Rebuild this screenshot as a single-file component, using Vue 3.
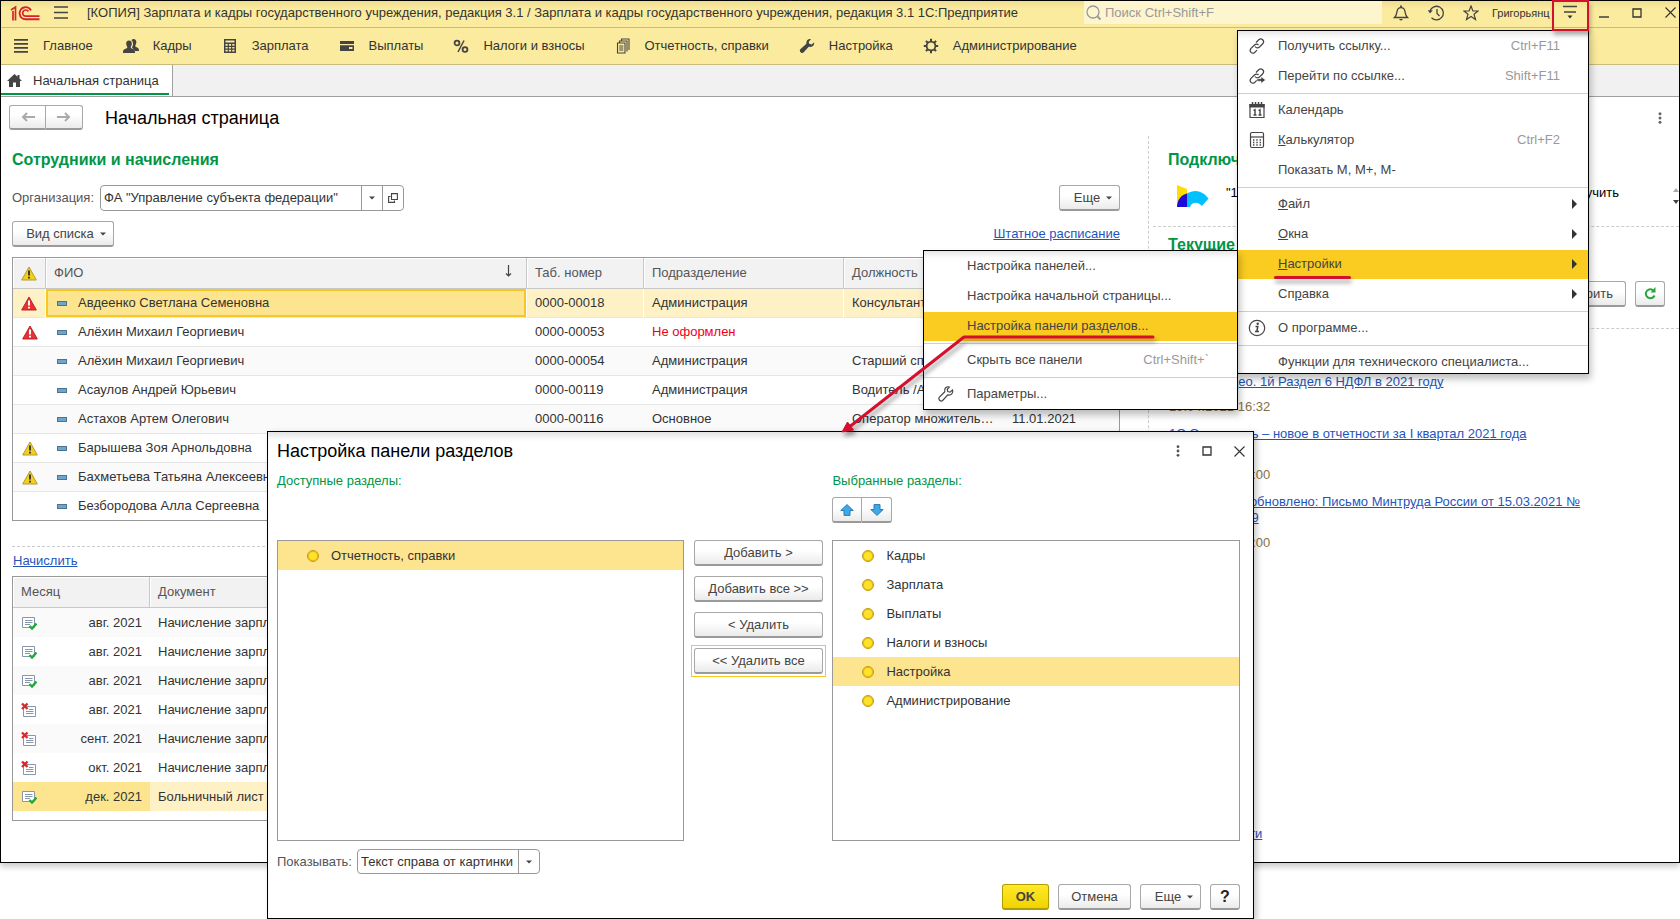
<script setup>
import { ref } from 'vue'

const sections = [
  { icon: 'list', label: 'Главное' },
  { icon: 'people', label: 'Кадры' },
  { icon: 'calc', label: 'Зарплата' },
  { icon: 'card', label: 'Выплаты' },
  { icon: 'percent', label: 'Налоги и взносы' },
  { icon: 'docs', label: 'Отчетность, справки' },
  { icon: 'wrench', label: 'Настройка' },
  { icon: 'gear', label: 'Администрирование' }
]

const employees = [
  { mark: 'error', name: 'Авдеенко Светлана Семеновна', num: '0000-00018', dept: 'Администрация', post: 'Консультант', date: '' },
  { mark: 'error', name: 'Алёхин Михаил Георгиевич', num: '0000-00053', dept: 'Не оформлен', post: '', date: '', off: true },
  { mark: '', name: 'Алёхин Михаил Георгиевич', num: '0000-00054', dept: 'Администрация', post: 'Старший специалист', date: '' },
  { mark: '', name: 'Асаулов Андрей Юрьевич', num: '0000-00119', dept: 'Администрация', post: 'Водитель /АХО/', date: '' },
  { mark: '', name: 'Астахов Артем Олегович', num: '0000-00116', dept: 'Основное', post: 'Оператор множительной техники', date: '11.01.2021' },
  { mark: 'warn', name: 'Барышева Зоя Арнольдовна', num: '', dept: '', post: '', date: '' },
  { mark: 'warn', name: 'Бахметьева Татьяна Алексеевна', num: '', dept: '', post: '', date: '' },
  { mark: '', name: 'Безбородова Алла Сергеевна', num: '', dept: '', post: '', date: '' }
]

const accruals = [
  { ok: true, month: 'авг. 2021', doc: 'Начисление зарплаты' },
  { ok: true, month: 'авг. 2021', doc: 'Начисление зарплаты' },
  { ok: true, month: 'авг. 2021', doc: 'Начисление зарплаты' },
  { ok: false, month: 'авг. 2021', doc: 'Начисление зарплаты' },
  { ok: false, month: 'сент. 2021', doc: 'Начисление зарплаты' },
  { ok: false, month: 'окт. 2021', doc: 'Начисление зарплаты' },
  { ok: true, month: 'дек. 2021', doc: 'Больничный лист' }
]

const mainMenu = [
  [
    { icon: 'link', pre: 'Получить ссылку...', key: 'Ctrl+F11' },
    { icon: 'golink', pre: 'Перейти по ссылке...', key: 'Shift+F11' }
  ],
  [
    { icon: 'calendar', pre: 'Кален', hot: 'д', post: 'арь' },
    { icon: 'calculator', hot: 'К', post: 'алькулятор', key: 'Ctrl+F2' },
    { pre: 'Показать М, М+, М-' }
  ],
  [
    { hot: 'Ф', post: 'айл', sub: true },
    { hot: 'О', post: 'кна', sub: true },
    { hot: 'Н', post: 'астройки', sub: true, active: true },
    { pre: 'Сп', hot: 'р', post: 'авка', sub: true }
  ],
  [{ icon: 'info', pre: 'О программе...' }],
  [{ pre: 'Функции для технического специалиста...' }]
]

const subMenu = [
  [
    { pre: 'Настройка панелей...' },
    { pre: 'Настройка начальной страницы...' },
    { pre: 'Настройка панели разделов...', active: true }
  ],
  [{ pre: 'Скрыть все панели', key: 'Ctrl+Shift+`' }],
  [{ icon: 'spanner', pre: 'Параметры...' }]
]

const available = ['Отчетность, справки']
const chosen = ['Кадры', 'Зарплата', 'Выплаты', 'Налоги и взносы', 'Настройка', 'Администрирование']
const activeChosen = ref('Настройка')
const organization = ref('ФА "Управление субъекта федерации"')
const search = ref('')
</script>

<template>
  <div class="screen">
    <div class="window">
      <header class="titlebar">
        <svg class="logo" width="30" height="16" viewBox="0 0 30 16" fill="none" stroke="#d8232a">
          <path d="M1 5L5.500 2V15.500M3 6V15.500" stroke-width="1.700" />
          <path d="M21 5.500A6 6 0 1 0 15.500 14.200H29.500" stroke-width="1.900" />
          <path d="M18.400 6.500A3.100 3.100 0 1 0 15.500 11.200H29.500" stroke-width="1.700" />
        </svg>
        <button class="bare burger" aria-label="Меню">
          <svg width="16" height="13" viewBox="0 0 16 13" stroke="#444" stroke-width="1.300"><path d="M1 1H15M1 6.500H15M1 12H15" /></svg>
        </button>
        <div class="apptitle">[КОПИЯ] Зарплата и кадры государственного учреждения, редакция 3.1 / Зарплата и кадры государственного учреждения, редакция 3.1 1С:Предприятие</div>
        <label class="search">
          <svg width="16" height="16" viewBox="0 0 16 16" fill="none" stroke="#999" stroke-width="1.300"><circle cx="7" cy="7" r="6" /><path d="M11.500 11.500L14.500 14.500" stroke-width="2" /></svg>
          <input v-model="search" type="text" placeholder="Поиск Ctrl+Shift+F" aria-label="Поиск" />
        </label>
        <div class="tools">
          <button class="bare" aria-label="Уведомления">
            <svg width="16" height="16" viewBox="0 0 16 16" fill="none" stroke="#444" stroke-width="1.300"><path d="M1.500 12.500H14.500C12.500 10.500 12.500 9 12 6.500C11.500 4 10 2.700 8 2.700S4.500 4 4 6.500C3.500 9 3.500 10.500 1.500 12.500Z" /><path d="M8 .5V2.500" stroke-width="1.800" /><path d="M5.800 14H10.200L8 15.800Z" fill="#444" stroke="none" /></svg>
          </button>
          <button class="bare" aria-label="История">
            <svg width="18" height="16" viewBox="0 0 18 16" fill="none" stroke="#444" stroke-width="1.300"><path d="M3 6A6.800 6.800 0 1 1 4.500 12.700" /><path d="M10 4V8.500L12.500 11" /><path d="M.8 5.200H5.800L3 8.500Z" fill="#444" stroke="none" /></svg>
          </button>
          <button class="bare" aria-label="Избранное">
            <svg width="16" height="16" viewBox="0 0 16 16" fill="none" stroke="#444" stroke-width="1.200"><path d="M8 1L9.900 6H15L11 9.200L12.500 14.500L8 11.400L3.500 14.500L5 9.200L1 6H6.100Z" /></svg>
          </button>
        </div>
        <div class="user">Григорьянц</div>
        <button class="bare service" aria-label="Сервис и настройки">
          <svg width="16" height="15" viewBox="0 0 16 15" stroke="#444" stroke-width="1.400"><path d="M1 1.500H15M2 7H14" /><path d="M5.500 10.500H10.500L8 13.500Z" fill="#333" stroke="none" /></svg>
        </button>
        <div class="wincontrols">
          <button class="bare" aria-label="Свернуть"><svg width="10" height="12" viewBox="0 0 10 12" stroke="#333" stroke-width="1.400"><path d="M0 10H10" /></svg></button>
          <button class="bare" aria-label="Развернуть"><svg width="10" height="10" viewBox="0 0 10 10" fill="none" stroke="#333" stroke-width="1.300"><path d="M1 1H9V9H1Z" /></svg></button>
          <button class="bare" aria-label="Закрыть"><svg width="11" height="11" viewBox="0 0 11 11" stroke="#333" stroke-width="1.100"><path d="M.5 .5L10.500 10.500M10.500 .5L.5 10.500" /></svg></button>
        </div>
      </header>

      <nav class="sections">
        <a v-for="s in sections" :key="s.label" href="#" class="section">
          <svg width="16" height="16" viewBox="0 0 16 16" fill="#444">
            <path v-if="s.icon === 'list'" d="M1 1H15V2.700H1ZM1 5H15V6.700H1ZM1 9H15V10.700H1ZM1 13H15V14.700H1Z" />
            <g v-else-if="s.icon === 'people'">
              <path d="M10.500 1C12.500 1 13.500 2.500 13.300 4.500C13.200 6 12.600 6.800 12.300 7.500V8.500L15 10C15.700 10.500 16 11.300 16 13H12L9 9.500C10.500 7 10.500 4 8.500 2.200C9 1.400 9.600 1 10.500 1Z" />
              <path d="M6 2.500C8 2.500 9 4 8.800 6C8.700 7.500 8 8.200 7.800 8.800V10L11 11.600C11.700 12 12 13 12 15H0C0 13 .3 12 1 11.600L4.200 10V8.800C4 8.200 3.300 7.500 3.200 6C3 4 4 2.500 6 2.500Z" />
            </g>
            <path v-else-if="s.icon === 'calc'" fill-rule="evenodd" d="M2 1H14V15H2ZM3.500 2.500V4.500H12.500V2.500ZM3.500 6V7.700H5.700V6ZM6.900 6V7.700H9.100V6ZM10.300 6V7.700H12.500V6ZM3.500 8.900V10.600H5.700V8.900ZM6.900 8.900V10.600H9.100V8.900ZM10.300 8.900V10.600H12.500V8.900ZM3.500 11.800V13.500H5.700V11.800ZM6.900 11.800V13.500H9.100V11.800ZM10.300 11.800V13.500H12.500V11.800Z" />
            <path v-else-if="s.icon === 'card'" fill-rule="evenodd" d="M1 3H15V6H1ZM1 7.200H15V13H1ZM10 9V11H13.500V9Z" />
            <g v-else-if="s.icon === 'percent'" fill="none" stroke="#444" stroke-width="1.800"><circle cx="4" cy="5" r="2.400" /><circle cx="12" cy="11.500" r="2.400" /><path d="M11 2.500L5 14" stroke-width="1.500" /></g>
            <g v-else-if="s.icon === 'docs'" fill="none" stroke="#444" stroke-width="1.100"><path d="M2.500 5H10V15H2.500ZM4.500 5V3H12V13.500M6.500 3V1H14V12" /><path d="M4.200 8H8.300M4.200 10H8.300M4.200 12H8.300" /></g>
            <path v-else-if="s.icon === 'wrench'" d="M15 4.500L12.700 6.500L10.200 5.800L9.700 3.800L12 1.200C9.500 .4 6.800 2.500 7.400 5.800L1.300 11.200C-.3 12.900 2.500 16.300 4.500 14.600L9.800 8.800C13 9.500 15.800 7.500 15 4.500Z" />
            <g v-else fill="none" stroke="#444"><circle cx="8" cy="8" r="4.400" stroke-width="1.800" /><path d="M8 .8V3.500M8 12.500V15.200M.8 8H3.500M12.500 8H15.200M2.900 2.900L4.800 4.800M11.200 11.200L13.100 13.100M2.900 13.100L4.800 11.200M11.200 4.800L13.100 2.900" stroke-width="2" /></g>
          </svg>
          <span>{{ s.label }}</span>
        </a>
      </nav>

      <div class="tabs">
        <a href="#" class="tab">
          <svg width="15" height="13" viewBox="0 0 15 13" fill="#444"><path d="M7.500 0L10.500 2.700V1H12.500V4.500L15 7H13V13H9V8.500H6V13H2V7H0Z" /></svg>
          <span>Начальная страница</span>
        </a>
      </div>

      <div class="pagehead">
        <div class="pair nav">
          <button class="btn" aria-label="Назад"><svg width="14" height="10" viewBox="0 0 14 10" fill="none" stroke="#aaa" stroke-width="2"><path d="M14 5H2M6 1L2 5L6 9" /></svg></button>
          <button class="btn" aria-label="Вперед"><svg width="14" height="10" viewBox="0 0 14 10" fill="none" stroke="#aaa" stroke-width="2"><path d="M0 5H12M8 1L12 5L8 9" /></svg></button>
        </div>
        <h1>Начальная страница</h1>
        <button class="bare kebab" aria-label="Еще действия"><svg width="4" height="12" viewBox="0 0 4 12" fill="#666"><circle cx="2" cy="1.700" r="1.500" /><circle cx="2" cy="6" r="1.500" /><circle cx="2" cy="10.300" r="1.500" /></svg></button>
      </div>

      <div class="content">
        <main class="left">
          <h2>Сотрудники и начисления</h2>
          <div class="orgrow">
            <label for="org">Организация:</label>
            <div class="combo">
              <input id="org" v-model="organization" type="text" />
              <button aria-label="Выбрать из списка"><svg width="6" height="4" viewBox="0 0 6 4" fill="#444"><path d="M0 .5H6L3 3.500Z" /></svg></button>
              <button aria-label="Открыть"><svg width="10" height="10" viewBox="0 0 10 10" fill="none" stroke="#444" stroke-width="1.100"><path d="M3.500 .6H9.400V6.500H3.500ZM2.500 3.500H.6V9.400H6.500V7.500" /></svg></button>
            </div>
            <button class="btn more">Еще<svg width="6" height="4" viewBox="0 0 6 4" fill="#444"><path d="M0 .5H6L3 3.500Z" /></svg></button>
          </div>
          <div class="viewrow">
            <button class="btn view">Вид списка<svg width="6" height="4" viewBox="0 0 6 4" fill="#444"><path d="M0 .5H6L3 3.500Z" /></svg></button>
            <a href="#">Штатное расписание</a>
          </div>

          <table class="grid employees">
            <colgroup><col class="c-mark" /><col class="c-name" /><col class="c-num" /><col class="c-dept" /><col class="c-post" /><col class="c-date" /></colgroup>
            <thead>
              <tr>
                <th class="mark"><svg width="16" height="15" viewBox="0 0 16 15"><path d="M8 1L15.300 14H.7Z" fill="#f2cf1d" stroke="#b89a2c" stroke-linejoin="round" /><path d="M7 4.500H9V9.500H7ZM7 10.700H9V12.500H7Z" fill="#3b3b3b" /></svg></th>
                <th><div class="sorted"><span>ФИО</span><svg width="7" height="12" viewBox="0 0 7 12" fill="none" stroke="#444" stroke-width="1.200"><path d="M3.500 0V11M1 8.500L3.500 11L6 8.500" /></svg></div></th>
                <th>Таб. номер</th>
                <th>Подразделение</th>
                <th>Должность</th>
                <th></th>
              </tr>
            </thead>
            <tbody>
              <tr v-for="(e, i) in employees" :key="i" :class="{ current: i === 0 }">
                <td class="mark">
                  <svg v-if="e.mark" width="16" height="15" viewBox="0 0 16 15">
                    <path d="M8 1L15.300 14H.7Z" :fill="e.mark === 'error' ? '#ea2f35' : '#f2cf1d'" :stroke="e.mark === 'error' ? '#b5272b' : '#b89a2c'" stroke-linejoin="round" />
                    <path d="M7 4.500H9V9.500H7ZM7 10.700H9V12.500H7Z" :fill="e.mark === 'error' ? '#fff' : '#3b3b3b'" />
                  </svg>
                </td>
                <td class="name"><div class="person"><i class="dash"></i><span>{{ e.name }}</span></div></td>
                <td>{{ e.num }}</td>
                <td :class="{ off: e.off }">{{ e.dept }}</td>
                <td>{{ e.post }}</td>
                <td>{{ e.date }}</td>
              </tr>
            </tbody>
          </table>

          <div class="accrue"><a href="#">Начислить</a></div>

          <table class="grid accruals">
            <colgroup><col class="c-month" /><col /></colgroup>
            <thead><tr><th>Месяц</th><th>Документ</th></tr></thead>
            <tbody>
              <tr v-for="(a, i) in accruals" :key="i" :class="{ chosen: i === 6 }">
                <td>
                  <div class="month">
                    <svg width="16" height="16" viewBox="0 0 16 16" fill="none">
                      <g v-if="a.ok"><path d="M1.500 2.500H13.500V12.500H1.500Z" stroke="#8796ab" fill="#fff" /><path d="M4 5.500H11.500M4 7.500H11.500M4 9.500H9" stroke="#8796ab" /><path d="M8.500 11L11 13.500L15.500 8.500" stroke="#20a83a" stroke-width="2.400" /></g>
                      <g v-else><path d="M2.500 4.500H14.500V14.500H2.500Z" stroke="#8796ab" fill="#fff" /><path d="M8 7.500H12.500M5 9.500H12.500M5 11.500H12.500" stroke="#8796ab" /><path d="M1 1.500L6.500 7M6.500 1.500L1 7" stroke="#d42b30" stroke-width="2.400" /></g>
                    </svg>
                    <span>{{ a.month }}</span>
                  </div>
                </td>
                <td>{{ a.doc }}</td>
              </tr>
            </tbody>
          </table>
        </main>

        <aside class="right">
          <section class="connect">
            <h2>Подключение</h2>
            <div class="promo">
              <svg width="32" height="22" viewBox="0 0 32 22"><path d="M0 0L10 4V9C5 11 1 15 0 22Z" fill="#ffdd00" /><path d="M10 8.500V22H0C0 15 4 10 10 8.500Z" fill="#1d0bd6" /><path d="M10 8.500C18 3.500 26 6 31.500 13.500L25 21C22 17 15 16 13 22H10Z" fill="#00c0ff" /></svg>
              <span>"1С"</span>
              <span class="tail">Получить</span>
              <div class="spin">
                <svg width="6" height="16" viewBox="0 0 6 16"><path d="M0 4L3 0L6 4Z" fill="#aaa" /><path d="M0 12H6L3 16Z" fill="#444" /></svg>
              </div>
            </div>
          </section>
          <section class="tasks">
            <h2>Текущие дела</h2>
            <div class="taskbtns">
              <button class="btn">Проверить</button>
              <button class="btn square" aria-label="Обновить"><svg width="12" height="13" viewBox="0 0 12 13" fill="none" stroke="#2ba33c" stroke-width="2"><path d="M9.500 3.500A4.500 4.500 0 1 0 10.500 8.500" /><path d="M11.500 0V5.500H6.500Z" fill="#2ba33c" stroke="none" /></svg></button>
            </div>
          </section>
          <section class="news">
            <a href="#">Лекция-видео. 1й Раздел 6 НДФЛ в 2021 году</a>
            <time>19.04.2021 16:32</time>
            <a href="#" class="tall">1С:Отчетность – новое в отчетности за I квартал 2021 года</a>
            <time>12.04.2021 00:00</time>
            <a href="#">Добавлено и обновлено: Письмо Минтруда России от 15.03.2021 №<br />14-6/10/В-2969</a>
            <time>09.04.2021 00:00</time>
            <a href="#" class="all">Другие новости</a>
          </section>
        </aside>
      </div>
    </div>

    <div v-for="(menu, m) in [mainMenu, subMenu]" :key="m" class="menu" :class="m ? 'sub' : 'main'" role="menu">
      <div v-for="(group, g) in menu" :key="g" class="group">
        <button v-for="item in group" :key="(item.pre || '') + (item.hot || '')" class="item" :class="{ active: item.active }" role="menuitem">
          <span class="ico">
            <svg v-if="item.icon" width="18" height="18" viewBox="0 0 18 18" fill="none" stroke="#444" stroke-width="1.200">
              <g v-if="item.icon === 'link' || item.icon === 'golink'">
                <path d="M8 5.500L11 2.500C13.500 .5 17 3.800 15 6.500L11.500 10C10 11.300 8 11 7 9.500" />
                <path d="M10.500 8C9.500 6.800 7.800 6.700 6.500 8L2.800 11.700C.8 14.500 4 17.500 6.700 15.500L9 13.200" />
                <path v-if="item.icon === 'golink'" d="M9 11.700H13V9.500L17.500 13L13 16.500V14.300H9Z" fill="#444" stroke="#fff" stroke-width=".6" />
              </g>
              <g v-else-if="item.icon === 'calendar'"><path d="M2 3.500H16V16.500H2Z" /><path d="M2 3.500H16V6H2Z" fill="#444" /><path d="M4.500 1V4M7.500 1V4M10.500 1V4M13.500 1V4" stroke-width="1.500" /><path d="M5.500 9.500L7 8.700V14M5.500 14H8.500M10.500 9.500L12 8.700V14M10.500 14H13.500" stroke-width="1.400" /></g>
              <g v-else-if="item.icon === 'calculator'"><rect x="2.500" y="1.500" width="13" height="15" rx="1.500" /><path d="M2.500 6H15.500" /><path d="M5 9H13M5 11.500H13M5 14H13" stroke-dasharray="1.400 1.900" stroke-width="1.300" /></g>
              <g v-else-if="item.icon === 'info'"><circle cx="9" cy="9" r="7.700" /><path d="M7.500 7.500H9.800L8.800 12.500H11M7 12.500H9" stroke-width="1.500" /><circle cx="9.700" cy="4.700" r="1.200" fill="#444" stroke="none" /></g>
              <path v-else d="M15.500 5L13 7.200L10.800 6.500L10.200 4.500L12.300 2C9.500 1 6.800 3.500 7.800 6.800L2.200 12.300C.8 14.200 3.500 17.200 5.700 15.500L10.700 9.900C14 10.700 16.700 8 15.500 5Z" />
            </svg>
          </span>
          <span class="lbl">{{ item.pre }}<u v-if="item.hot">{{ item.hot }}</u>{{ item.post }}</span>
          <span class="key">{{ item.key }}</span>
          <span class="arr"><svg v-if="item.sub" width="5" height="10" viewBox="0 0 5 10" fill="#333"><path d="M0 0L5 5L0 10Z" /></svg></span>
        </button>
      </div>
    </div>

    <div class="dialog" role="dialog" aria-labelledby="dlg-title">
      <div class="dhead">
        <h1 id="dlg-title">Настройка панели разделов</h1>
        <div class="dctl">
          <button class="bare" aria-label="Еще действия"><svg width="4" height="12" viewBox="0 0 4 12" fill="#555"><circle cx="2" cy="1.700" r="1.400" /><circle cx="2" cy="6" r="1.400" /><circle cx="2" cy="10.300" r="1.400" /></svg></button>
          <button class="bare" aria-label="Развернуть"><svg width="10" height="10" viewBox="0 0 10 10" fill="none" stroke="#333" stroke-width="1.300"><path d="M1 1H9V9H1Z" /></svg></button>
          <button class="bare" aria-label="Закрыть"><svg width="11" height="11" viewBox="0 0 11 11" stroke="#333" stroke-width="1.100"><path d="M.5 .5L10.500 10.500M10.500 .5L.5 10.500" /></svg></button>
        </div>
      </div>
      <div class="picker">
        <div class="col">
          <div class="cap">Доступные разделы:</div>
          <div class="order"></div>
          <ul class="list">
            <li v-for="a in available" :key="a" class="on"><i class="coin"></i>{{ a }}</li>
          </ul>
        </div>
        <div class="moves">
          <button class="btn">Добавить &gt;</button>
          <button class="btn">Добавить все &gt;&gt;</button>
          <button class="btn">&lt; Удалить</button>
          <div class="focusring"><button class="btn">&lt;&lt; Удалить все</button></div>
        </div>
        <div class="col wide">
          <div class="cap">Выбранные разделы:</div>
          <div class="order">
            <div class="pair updown">
              <button class="btn" aria-label="Вверх"><svg width="14" height="12" viewBox="0 0 14 12"><path d="M7 .6L13.200 6.500H10V11.400H4V6.500H.8Z" fill="#3fa9e8" stroke="#2b7bb0" /></svg></button>
              <button class="btn" aria-label="Вниз"><svg width="14" height="12" viewBox="0 0 14 12"><path d="M7 11.400L13.200 5.500H10V.6H4V5.500H.8Z" fill="#3fa9e8" stroke="#2b7bb0" /></svg></button>
            </div>
          </div>
          <ul class="list">
            <li v-for="c in chosen" :key="c" :class="{ on: c === activeChosen }" @click="activeChosen = c"><i class="coin"></i>{{ c }}</li>
          </ul>
        </div>
      </div>
      <div class="showrow">
        <label for="show">Показывать:</label>
        <div class="selwrap">
          <select id="show"><option>Текст справа от картинки</option></select>
          <span class="selarr"><svg width="6" height="4" viewBox="0 0 6 4" fill="#444"><path d="M0 .5H6L3 3.500Z" /></svg></span>
        </div>
      </div>
      <div class="dfoot">
        <button class="btn ok">OK</button>
        <button class="btn cancel">Отмена</button>
        <button class="btn more">Еще<svg width="6" height="4" viewBox="0 0 6 4" fill="#444"><path d="M0 .5H6L3 3.500Z" /></svg></button>
        <button class="btn square help">?</button>
      </div>
    </div>

    <div class="redbox"></div>
    <svg class="callout" width="320" height="166" viewBox="0 0 320 166" fill="none" stroke="#d50f2e">
      <path d="M123 69H312" stroke-width="3" stroke-linecap="round" />
      <path d="M123 69L7 160" stroke-width="3" />
      <path d="M1 164L6.500 154L12.500 162Z" fill="#d50f2e" />
    </svg>
    <div class="redline"></div>
  </div>
</template>

<style>
html, body { margin: 0; background: #fff; }
</style>

<style scoped>
.screen { position: relative; min-height: 100vh; overflow: hidden; font: 13px/16px "Liberation Sans", Arial, sans-serif; color: #333; box-sizing: border-box; }
.screen *, .screen *::before { box-sizing: border-box; }
button, input, select { font: inherit; color: inherit; }
h1, h2, ul { margin: 0; padding: 0; }
a { color: #1f55bb; }
.bare { background: none; border: 0; padding: 0; display: flex; align-items: center; justify-content: center; }
.window { min-height: calc(100vh - 56px); border: 1px solid #000; box-shadow: 0 4px 6px rgba(0, 0, 0, .2); display: flex; flex-direction: column; }

.titlebar { height: 27px; display: flex; align-items: center; background: linear-gradient(#eedd92, #fbeb9e 8px); border-bottom: 1px solid #c9bb7b; padding: 0 3px 3px 9px; }
.burger { margin-left: 13px; }
.apptitle { flex: 1; min-width: 0; margin-left: 18px; white-space: nowrap; overflow: hidden; }
.search { width: 298px; height: 23px; display: flex; align-items: center; gap: 3px; background: #fdf5cd; padding-left: 2px; }
.search input { flex: 1; min-width: 0; border: 0; background: none; padding: 0; outline: 0; }
.search input::placeholder { color: #999; opacity: 1; }
.tools { display: flex; gap: 18px; margin-left: 11px; }
.user { margin-left: 13px; width: 58px; font-size: 11px; }
.service { margin-left: 12px; }
.wincontrols { display: flex; gap: 23px; margin-left: 21px; align-items: center; }

.sections { height: 37px; display: flex; align-items: center; gap: 30px; background: #fbeb9e; border-bottom: 1px solid #c9bb7b; padding-left: 12px; }
.section { display: flex; align-items: center; gap: 14px; color: #333; text-decoration: none; white-space: nowrap; }
.tabs { height: 32px; background: #f1f1f1; border-bottom: 1px solid #a0a0a0; display: flex; }
.tab { width: 172px; display: flex; align-items: center; gap: 11px; padding-left: 6px; background: linear-gradient(#009646, #009646) left 28px / 168px 2px no-repeat #fff; border-right: 1px solid #a0a0a0; color: #333; text-decoration: none; white-space: nowrap; }

.pagehead { display: flex; align-items: center; padding: 8px 17px 6px 8px; height: 39px; }
.pagehead h1, .dhead h1 { font-size: 18px; line-height: 24px; font-weight: 400; color: #000; }
.pagehead h1 { margin-left: 22px; flex: 1; }
.btn { height: 26px; border: 1px solid #a8a8a8; border-bottom: 2px solid #9a9a9a; border-radius: 3px; background: linear-gradient(#fff 40%, #ebebeb); padding: 0 12px; display: inline-flex; align-items: center; justify-content: center; color: #444; white-space: nowrap; }
.btn svg { flex: none; }
.btn.more { width: 61px; gap: 6px; padding: 0 0 0 7px; }
.btn.square { width: 30px; padding: 0; }
.pair { display: flex; }
.pair .btn:first-child { border-radius: 3px 0 0 3px; }
.pair .btn:last-child { border-radius: 0 3px 3px 0; border-left: 0; }
.nav .btn { width: 37px; height: 25px; padding: 0; }

.content { flex: 1; display: flex; }
.left { flex: 1; min-width: 0; padding: 12px 28px 0 11px; border-right: 1px dashed #ccc; }
h2 { font-size: 16px; line-height: 24px; color: #009646; white-space: nowrap; }
.orgrow { display: flex; align-items: center; margin-top: 13px; }
.orgrow label, .showrow label { color: #555; }
.combo { display: flex; width: 304px; height: 26px; margin-left: 6px; border: 1px solid #999; border-radius: 4px; }
.combo input { flex: 1; min-width: 0; border: 0; outline: 0; background: none; padding: 0 3px; }
.combo button { width: 21px; border: 0; border-left: 1px solid #999; background: none; padding: 0; display: flex; align-items: center; justify-content: center; }
.orgrow .more { margin-left: auto; }
.viewrow { display: flex; align-items: center; justify-content: space-between; margin-top: 10px; }
.view { width: 102px; padding: 0 0 0 6px; gap: 6px; }

.grid { border-collapse: separate; border-spacing: 0; table-layout: fixed; width: 100%; border: 1px solid #999; }
.grid th { height: 31px; background: #f2f2f2; border-right: 1px solid #c8c8c8; border-bottom: 1px solid #c8c8c8; font-weight: 400; text-align: left; color: #555; padding: 0 8px; box-shadow: inset 1px 1px #fff; }
.grid th:last-child { border-right: 0; }
.grid td { height: 29px; padding: 0 8px; white-space: nowrap; overflow: hidden; text-overflow: ellipsis; }
.employees { margin-top: 10px; }
.employees td { border-bottom: 1px solid #e6e6e6; }
.employees tbody tr:last-child td { height: 28px; border-bottom: 0; }
.employees tbody tr:nth-child(odd) td { background: #fafafa; }
.employees tbody tr.current td { background: #fef1c6; border-right: 1px solid #fff; }
.employees tbody tr.current td.name { background: #fde58f; box-shadow: inset 0 0 0 2px #f8c822; }
.grid .mark { padding: 0; text-align: center; }
.mark svg { vertical-align: middle; }
.c-mark { width: 33px; }
.c-num { width: 117px; }
.c-dept { width: 200px; }
.c-post { width: 160px; }
.c-date { width: 115px; }
.sorted { display: flex; justify-content: space-between; padding-right: 6px; }
.person { display: flex; align-items: center; gap: 11px; padding-left: 3px; }
.dash { width: 10px; height: 5px; background: #6da5cc; border: 1px solid #4c7390; }
.off { color: #f00018; }
.accrue { border-top: 1px dashed #ccc; margin-top: 25px; padding: 6px 1px 7px; }
.accruals tbody::after { content: ""; display: block; height: 9px; }
.accruals tbody tr:nth-child(odd) td { background: #fafafa; }
.accruals tbody tr.chosen td { background: #fef1c6; }
.accruals tbody tr.chosen td:first-child { background: #fde58f; }
.c-month { width: 137px; }
.month { display: flex; align-items: center; justify-content: space-between; }

.right { width: 530px; display: flex; flex-direction: column; }
.connect { height: 91px; padding: 12px 0 0 20px; margin-left: 4px; border-bottom: 1px dashed #ccc; }
.connect h2, .tasks h2 { margin-left: -5px; }
.promo { display: flex; align-items: flex-start; margin-top: 13px; padding: 0 0 0 4px; color: #000; }
.promo svg { flex: none; }
.promo span { margin-left: 17px; }
.promo .tail { margin-left: auto; margin-right: 54px; }
.spin { display: flex; padding-top: 3px; }
.tasks { height: 102px; padding: 6px 14px 0 20px; margin-left: 4px; border-bottom: 1px dashed #ccc; }
.taskbtns { display: flex; justify-content: flex-end; gap: 9px; margin-top: 24px; }
.news { flex: 1; display: flex; flex-direction: column; align-items: flex-start; padding: 45px 60px 20px 20px; white-space: nowrap; }
.news time { color: #87703f; margin: 9px 0 11px; }
.news .tall { min-height: 32px; }
.news .all { margin-top: auto; }

.menu { position: absolute; background: #fff; border: 1px solid #000; box-shadow: 2px 5px 7px rgba(0, 0, 0, .25), inset 0 6px 6px -3px rgba(0, 0, 0, .12); overflow: hidden; }
.menu.main { right: 91px; top: 30px; width: 352px; height: 344px; z-index: 2; }
.menu.sub { right: 442px; top: 250px; width: 315px; z-index: 2; }
.group + .group { border-top: 1px solid #d4d0c0; margin-top: 2px; padding-top: 1px; }
.item { width: 100%; height: 30px; border: 0; background: none; padding: 0 11px 0 10px; display: flex; align-items: center; text-align: left; color: #444; }
.item.active { background: linear-gradient(#facb20, #facb20) bottom / 100% 29px no-repeat; }
.ico { width: 30px; display: flex; justify-content: flex-start; }
.sub .ico { width: 33px; padding-left: 3px; }
.lbl { flex: 1; white-space: nowrap; }
.key { color: #999; }
.arr { width: 17px; display: flex; justify-content: flex-end; }

.dialog { position: absolute; left: 267px; top: 431px; width: 987px; z-index: 3; background: #fff; border: 1px solid #000; box-shadow: 3px 2px 6px rgba(0, 0, 0, .22), inset 0 7px 6px -3px rgba(0, 0, 0, .12); padding: 7px 13px 8px 9px; }
.dhead { display: flex; align-items: center; justify-content: space-between; }
.dctl { display: flex; gap: 22px; align-items: center; margin-right: -5px; }
.picker { display: flex; margin-top: 10px; }
.col { width: 407px; }
.col.wide { width: 408px; }
.cap { color: #009646; line-height: 16px; }
.order { height: 51px; padding-top: 8px; }
.updown .btn { width: 30px; padding: 0; }
.list { height: 301px; border: 1px solid #999; list-style: none; }
.list li { height: 29px; display: flex; align-items: center; gap: 12px; padding-left: 29px; color: #333; }
.list li.on { background: #fde58f; }
.coin { width: 12px; height: 12px; border-radius: 50%; background: #fde428; border: 1px solid #c79a12; box-shadow: inset 0 0 0 1px #e9b81c; }
.moves { width: 149px; padding: 67px 9px 0 10px; display: flex; flex-direction: column; gap: 10px; }
.focusring { display: flex; outline: 1px solid #f8c822; outline-offset: 2px; }
.focusring .btn { flex: 1; }
.showrow { display: flex; align-items: center; gap: 5px; margin-top: 8px; }
.selwrap { position: relative; width: 183px; height: 25px; border: 1px solid #999; border-radius: 4px; }
.selwrap select { appearance: none; width: 100%; height: 23px; border: 0; background: none; padding: 0 22px 0 3px; outline: 0; }
.selarr { position: absolute; right: 0; top: 0; width: 21px; height: 23px; border-left: 1px solid #999; display: flex; align-items: center; justify-content: center; pointer-events: none; }
.dfoot { display: flex; justify-content: flex-end; gap: 9px; margin-top: 10px; }
.ok { width: 47px; padding: 0; font-weight: 700; border-color: #b39c00; background: linear-gradient(#ffe92a, #f0d400); }
.cancel { width: 73px; padding: 0; }
.help { font-size: 16px; font-weight: 700; color: #222; }

.redbox { position: absolute; right: 91px; top: 0; width: 37px; height: 31px; border: 2px solid #d50f2e; box-shadow: 2px 4px 4px rgba(0, 0, 0, .25); z-index: 4; }
.redline { position: absolute; right: 329px; top: 276px; width: 77px; height: 3px; border-radius: 2px; background: #d50f2e; box-shadow: 1px 4px 4px rgba(0, 0, 0, .35); z-index: 4; }
.callout { position: absolute; right: 519px; top: 268px; z-index: 4; filter: drop-shadow(2px 4px 2px rgba(0, 0, 0, .35)); pointer-events: none; }
</style>
